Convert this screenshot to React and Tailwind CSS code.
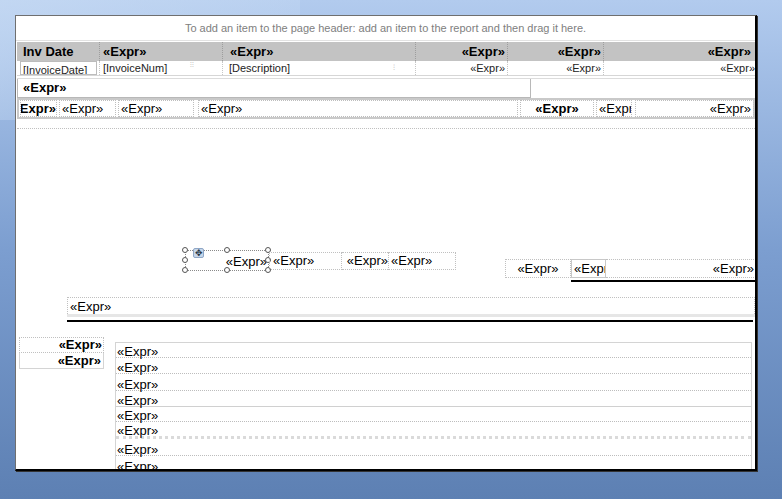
import React from "react";

const F = { fontFamily: '"Liberation Sans", Arial, sans-serif' };

function Cell({ w, className = "", children }) {
  return (
    <div className={`shrink-0 overflow-hidden whitespace-nowrap flex items-center ${className}`} style={{ width: w }}>
      {children}
    </div>
  );
}

function Handle({ x, y }) {
  return (
    <div
      className="absolute w-[6px] h-[6px] rounded-full border border-[#555] bg-white"
      style={{ left: x - 3, top: y - 3 }}
    />
  );
}

export default function App() {
  const listRows = [
    { h: 15, b: "border-b border-dotted border-[#bdbdbd]" },
    { h: 16, b: "border-b border-dotted border-[#bdbdbd]" },
    { h: 17, b: "border-b border-dotted border-[#bdbdbd]" },
    { h: 16, b: "border-b border-[#d0d0d0]" },
    { h: 15, b: "border-b border-dotted border-[#bdbdbd]" },
    { h: 17, b: "border-b-[3px] border-dotted border-[#dadada]" },
    { h: 17, b: "border-b border-dotted border-[#bdbdbd]" },
    { h: 16, b: "" },
  ];
  return (
    <div
      className="w-[782px] h-[499px] overflow-hidden relative bg-gradient-to-b from-[#b2cbee] via-[#7c9ed0] to-[#5d80b3] pl-[15px] pt-[15px]"
      style={F}
    >
      <div className="absolute left-0 top-0 w-[300px] h-[120px] bg-gradient-to-br from-[#c9dcf4] to-transparent opacity-70" />
      <div className="relative w-[742px] h-[456px] bg-white border-l border-t border-[#6f6f6f] border-r-2 border-b-2 border-r-black border-b-black shadow-[1px_1px_0_#333] flex flex-col">
        {/* page header */}
        <div className="h-[25px] shrink-0 flex items-center justify-center text-[11px] text-[#808080] border-b border-[#e2e2e2]">
          To add an item to the page header: add an item to the report and then drag it here.
        </div>
        {/* column header */}
        <div className="h-[19px] shrink-0 mt-[1px] ml-[1px] bg-[#c3c3c3] flex text-[13px] font-bold text-black">
          <Cell w={83} className="h-full pl-[6px] border-r border-dotted border-[#9d9d9d]">Inv Date</Cell>
          <Cell w={123} className="h-full pl-[3px] border-r border-dotted border-[#9d9d9d]">«Expr»</Cell>
          <Cell w={193} className="h-full pl-[7px] border-r border-dotted border-[#9d9d9d]">«Expr»</Cell>
          <Cell w={92} className="h-full justify-end pr-[2px] border-r border-dotted border-[#9d9d9d]">«Expr»</Cell>
          <Cell w={96} className="h-full justify-end pr-[2px] border-r border-dotted border-[#9d9d9d]">«Expr»</Cell>
          <Cell w={151} className="h-full justify-end pr-[4px]">«Expr»</Cell>
        </div>
        {/* detail row */}
        <div className="h-[15px] shrink-0 ml-[1px] flex text-[11px] text-[#222] border-b border-[#d6d6d6]">
          <Cell w={83} className="h-full pl-[3px] border-r border-dotted border-[#c6c6c6]">
            <div className="w-[77px] h-[14px] border border-[#bcbcbc] pl-[2px] leading-[17px] overflow-hidden">[InvoiceDate]</div>
          </Cell>
          <Cell w={123} className="h-full pl-[3px] border-r border-dotted border-[#c6c6c6] relative">
            [InvoiceNum]
            <span className="absolute left-[90px] top-[1px] text-[7px] text-[#b5b5b5] leading-[6px]">⁝⁝</span>
          </Cell>
          <Cell w={193} className="h-full pl-[6px] border-r border-dotted border-[#c6c6c6] relative">
            [Description]
            <span className="absolute left-[170px] top-[1px] text-[8px] text-[#c5c5c5]">⁝</span>
          </Cell>
          <Cell w={92} className="h-full justify-end pr-[2px] border-r border-dotted border-[#c6c6c6]">«Expr»</Cell>
          <Cell w={96} className="h-full justify-end pr-[2px] border-r border-dotted border-[#c6c6c6] relative">
            «Expr»
            <span className="absolute right-[-6px] top-[0px] text-[7px] text-[#c5c5c5] leading-[6px]">⁝⁝</span>
          </Cell>
          <Cell w={151} className="h-full justify-end">«Expr»</Cell>
        </div>
        {/* group header */}
        <div className="h-[20px] shrink-0 mt-[2px] ml-[1px] flex border-t border-[#dcdcdc]">
          <div className="w-[514px] h-full border border-t-0 border-[#b8b8b8] pl-[5px] flex items-center text-[13px] font-bold">«Expr»</div>
        </div>
        {/* group totals row */}
        <div className="h-[21px] shrink-0 ml-[1px] w-[738px] border-2 border-[#c9c9c9] flex items-center text-[13px] gap-[2px] pl-[1px]">
          <Cell w={37} className="h-full justify-end font-bold border border-dotted border-[#bdbdbd]">«Expr»</Cell>
          <Cell w={57} className="h-full pl-[2px] border border-dotted border-[#bdbdbd]">«Expr»</Cell>
          <Cell w={76} className="h-full pl-[2px] border border-dotted border-[#bdbdbd]">«Expr»</Cell>
          <Cell w={320} className="h-full pl-[2px] ml-[2px] border border-dotted border-[#bdbdbd]">«Expr»</Cell>
          <Cell w={74} className="h-full justify-center font-bold border border-dotted border-[#bdbdbd]">«Expr»</Cell>
          <Cell w={36} className="h-full pl-[2px] border border-dotted border-[#bdbdbd]">«Expr</Cell>
          <Cell w={119} className="h-full justify-end pr-[2px] ml-[1px] border border-dotted border-[#bdbdbd]">«Expr»</Cell>
        </div>
        <div className="h-[10px] shrink-0 ml-[1px] border-b border-dotted border-[#c0c0c0]" />
        {/* design canvas */}
        <div className="relative flex-1 overflow-hidden text-[13px] text-black">
          {/* selected control */}
          <div className="absolute left-[169px] top-[121px] w-[84px] h-[21px] border border-dotted border-[#8a8a8a] flex items-end justify-end pr-[1px] leading-[16px]">
            «Expr»
          </div>
          <div className="absolute left-[177px] top-[119px] w-[11px] h-[10px] bg-[#c6d6ea] border border-[#8ea6c6] rounded-[2px] flex items-center justify-center text-[9px] leading-none text-[#234]">✥</div>
          <Handle x={169} y={121} />
          <Handle x={211} y={121} />
          <Handle x={252} y={121} />
          <Handle x={169} y={131} />
          <Handle x={252} y={131} />
          <Handle x={169} y={141} />
          <Handle x={211} y={141} />
          <Handle x={252} y={141} />
          <div className="absolute left-[253px] top-[123px] flex h-[18px]">
            <Cell w={73} className="h-full items-end leading-[16px] pl-[3px] border border-dotted border-[#c0c0c0]">«Expr»</Cell>
            <Cell w={46} className="h-full items-end leading-[16px] justify-end border-y border-dotted border-[#c0c0c0]">«Expr»</Cell>
            <Cell w={68} className="h-full items-end leading-[16px] pl-[2px] border border-dotted border-[#c0c0c0]">«Expr»</Cell>
          </div>
          {/* right group */}
          <div className="absolute left-[489px] top-[130px] flex h-[19px]">
            <Cell w={66} className="h-full items-end leading-[17px] justify-center border border-dotted border-[#c0c0c0]">«Expr»</Cell>
            <Cell w={35} className="h-full items-end leading-[17px] pl-[2px] border border-[#c8c8c8]">«Expr</Cell>
            <Cell w={148} className="h-full items-end leading-[17px] justify-end border-y border-dotted border-[#c0c0c0]">«Expr»</Cell>
          </div>
          <div className="absolute left-[555px] top-[151px] w-[185px] h-[2px] bg-black" />
          {/* wide expr */}
          <div className="absolute left-[51px] top-[168px] w-[688px] flex flex-col">
            <div className="h-[17px] border border-b-0 border-dotted border-[#c0c0c0] pl-[2px] flex items-end leading-[15px]">
              «Expr»
            </div>
            <div className="h-[3px] bg-[#e6e6e6]" />
          </div>
          <div className="absolute left-[51px] top-[191px] w-[686px] h-[2px] bg-black" />
          {/* left totals */}
          <div className="absolute left-[3px] top-[208px] w-[85px] flex flex-col font-bold">
            <Cell w={85} className="h-[16px] items-end leading-[14px] justify-end pr-[1px] border border-dotted border-[#c0c0c0]">«Expr»</Cell>
            <Cell w={85} className="h-[16px] items-end leading-[15px] justify-end pr-[2px] border border-t-0 border-[#d4d4d4]">«Expr»</Cell>
          </div>
          {/* list */}
          <div className="absolute left-[99px] top-[213px] w-[637px] border border-[#d4d4d4] border-b-0 flex flex-col">
            {listRows.map((r, i) => (
              <div
                key={i}
                className={`shrink-0 pl-[1px] flex items-end ${r.b}`}
                style={{ height: r.h }}
              >
                <span className="relative top-[2px] leading-[15px]">«Expr»</span>
              </div>
            ))}
          </div>
        </div>
      </div>
    </div>
  );
}
